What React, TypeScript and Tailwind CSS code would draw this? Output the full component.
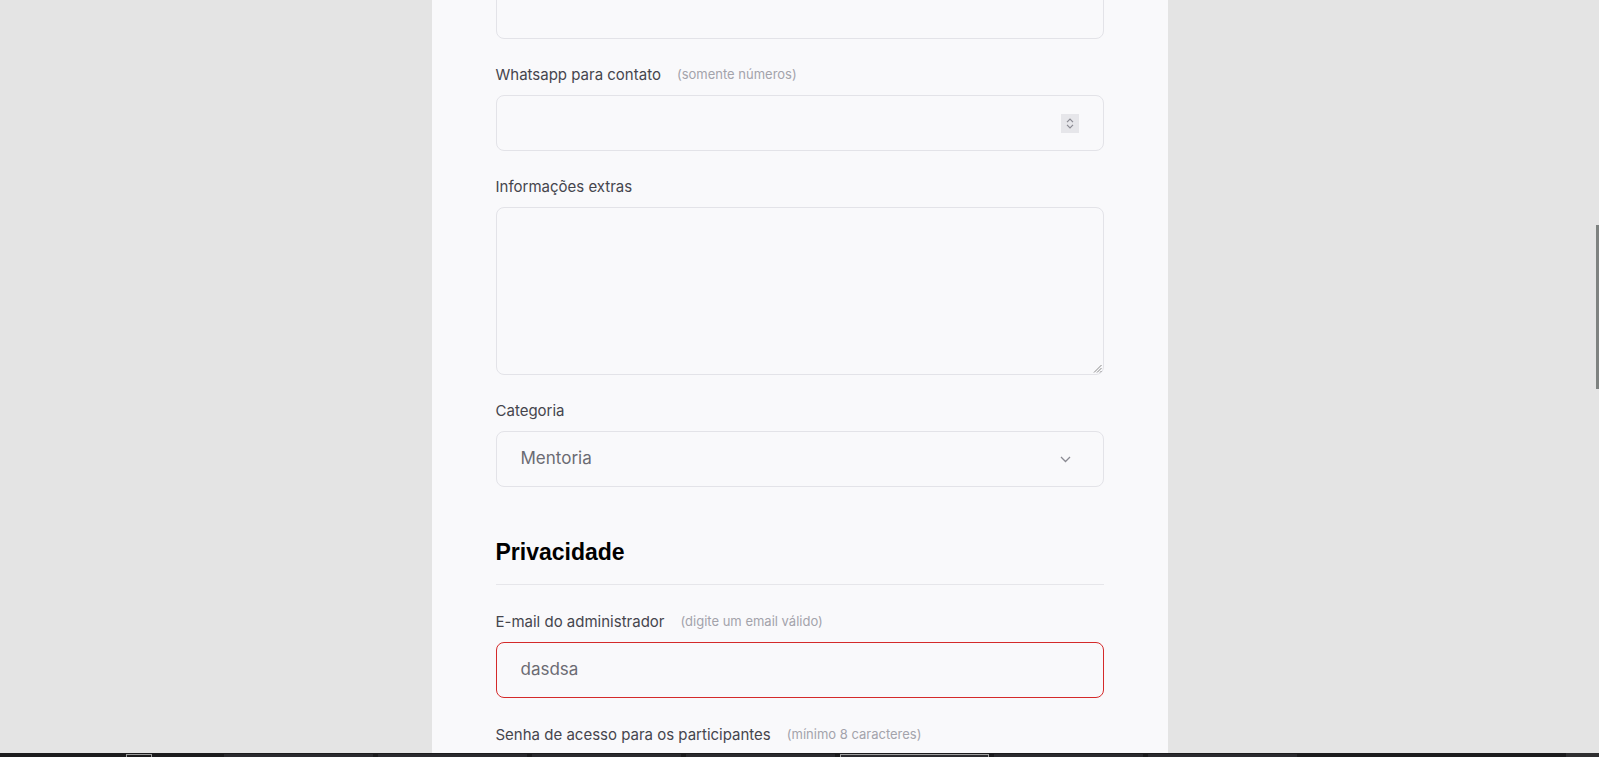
import React from "react";

type FieldProps = {
  label: string;
  hint?: string;
  children: React.ReactNode;
  className?: string;
};

function Field({ label, hint, children, className }: FieldProps) {
  return (
    <div className={className}>
      <div className="flex items-center h-5 mb-[10px] text-[15px] text-[#45454d] whitespace-nowrap">
        <span>{label}</span>
        {hint && <span className="ml-4 text-[13px] text-[#a3a3ab]">{hint}</span>}
      </div>
      {children}
    </div>
  );
}

const inputBox =
  "w-full h-14 rounded-lg border border-[#e3e3e8] bg-[#f9f9fb] flex items-center px-6 text-[17px] text-[#6b6b73]";

export default function App() {
  const tabs = [0, 1, 2, 3, 4, 5, 6];

  return (
    <div className="h-[757px] w-full flex flex-col bg-[#e4e4e4] font-['Inter',sans-serif] overflow-hidden relative">
      <div className="flex-1 overflow-hidden">
        <div className="mx-auto w-[736px] h-full bg-[#f9f9fb] px-16 flow-root">
          <div className={inputBox + " -mt-[17px]"} />

          <Field label="Whatsapp para contato" hint="(somente números)" className="mt-[26px]">
            <div className={inputBox + " justify-end pr-[24px]"}>
              <div className="w-[18px] h-[19px] bg-[#e6e6ea] flex flex-col items-center justify-center gap-[1px]">
                <svg width="8" height="5" viewBox="0 0 8 5" fill="none" stroke="#8a8a92" strokeWidth="1.2">
                  <path d="M1 4.2 L4 1.2 L7 4.2" />
                </svg>
                <svg width="8" height="5" viewBox="0 0 8 5" fill="none" stroke="#8a8a92" strokeWidth="1.2">
                  <path d="M1 0.8 L4 3.8 L7 0.8" />
                </svg>
              </div>
            </div>
          </Field>

          <Field label="Informações extras" className="mt-[26px]">
            <div className="relative w-full h-[168px] rounded-lg border border-[#e3e3e8] bg-[#f9f9fb]">
              <svg className="absolute right-[1px] bottom-[1px]" width="9" height="9" viewBox="0 0 9 9" stroke="#8a8a8a" strokeWidth="1">
                <path d="M8.5 1 L1 8.5 M8.5 4 L4 8.5 M8.5 7 L7 8.5" />
              </svg>
            </div>
          </Field>

          <Field label="Categoria" className="mt-[26px]">
            <div className={inputBox + " justify-between pr-[32px]"}>
              <span>Mentoria</span>
              <svg width="11" height="7" viewBox="0 0 11 7" fill="none" stroke="#8a8a92" strokeWidth="1.3">
                <path d="M1 1 L5.5 5.5 L10 1" />
              </svg>
            </div>
          </Field>

          <div className="mt-[49px] pb-4 border-b border-[#e6e6ea]">
            <h2 className="font-['Liberation_Sans',Arial,sans-serif] font-bold text-[23px] leading-8 text-black">
              Privacidade
            </h2>
          </div>

          <Field label="E-mail do administrador" hint="(digite um email válido)" className="mt-[27px]">
            <div className={inputBox.replace("border-[#e3e3e8]", "border-[#d42a2a]")}>dasdsa</div>
          </Field>

          <Field label="Senha de acesso para os participantes" hint="(mínimo 8 caracteres)" className="mt-[27px]">
            <div className={inputBox} />
          </Field>
        </div>
      </div>

      <div className="absolute right-0 top-[225px] w-[3px] h-[164px] bg-[#7e8280]" />

      <div className="h-[4px] bg-[#1b1b1d] flex items-start relative">
        <div className="ml-[126px] mt-[1px] w-[26px] h-[3px] border-t border-x border-[#9a9a9a]" />
        <div className="ml-[72px] flex gap-[5px] mt-[1px]">
          {tabs.map((t) => (
            <div
              key={t}
              className={
                t === 4
                  ? "w-[149px] h-[3px] bg-[#2c2c30] border-t border-x border-[#a0a0a0]"
                  : "w-[149px] h-[3px] bg-[#2a2a2e]"
              }
            />
          ))}
        </div>
        <div className="ml-auto w-[33px] h-[4px] bg-[#2e2e30]" />
      </div>
    </div>
  );
}
